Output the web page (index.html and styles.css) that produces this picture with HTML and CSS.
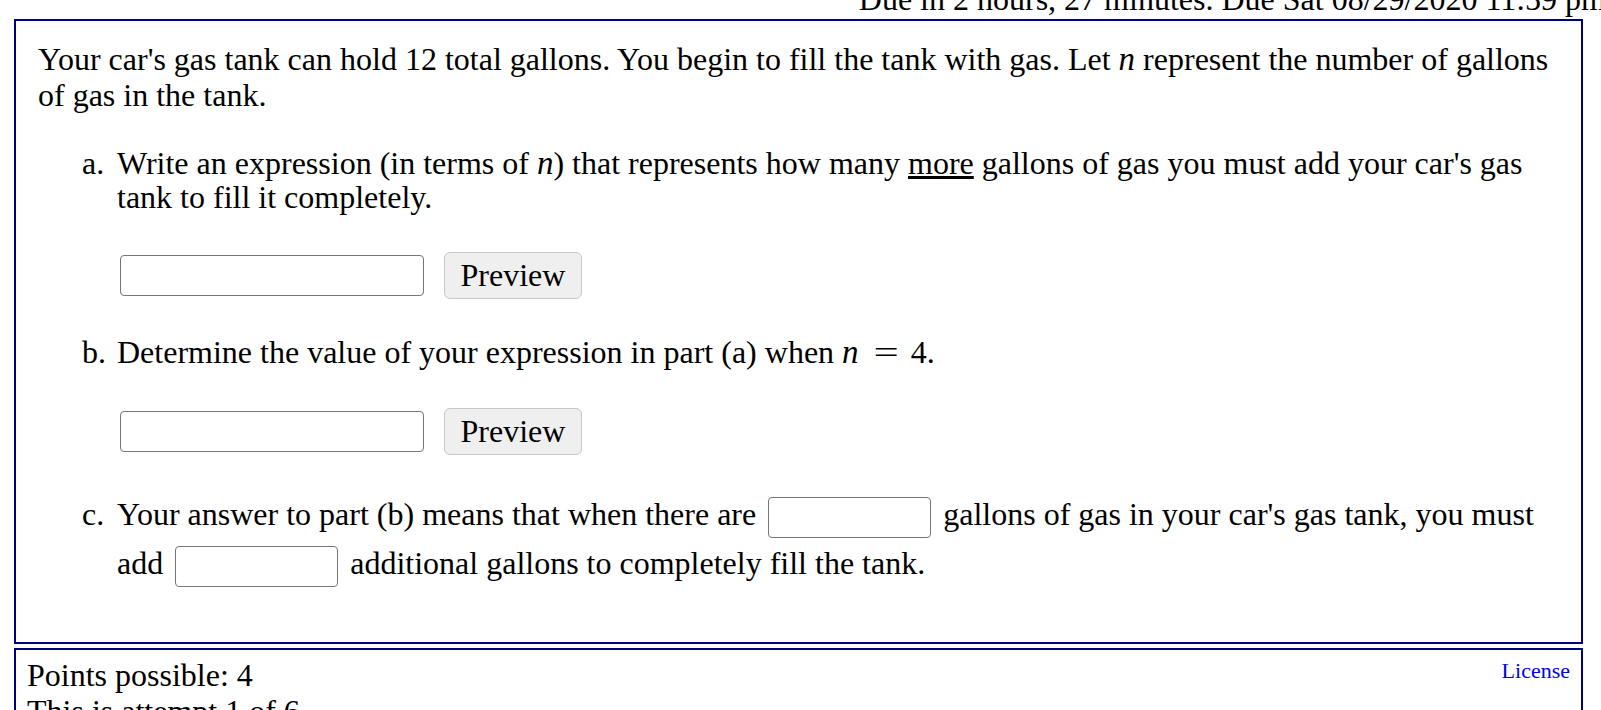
FILE: index.html
```html
<!DOCTYPE html>
<html>
<head>
<meta charset="utf-8">
<link rel="stylesheet" href="styles.css">
</head>
<body>
<div class="due"><span class="due-text">Due in 2 hours, 27 minutes. Due Sat 08/29/2020 11:59 pm</span></div>
<div class="question">
  <p class="intro">Your car's gas tank can hold 12 total gallons. You begin to fill the tank with gas. Let <i class="mv">n</i> represent the number of gallons of gas in the tank.</p>
  <div class="parts">
    <div class="part part-a">
      <span class="mark">a.</span>
      <div class="body">
        <div class="txt">Write an expression (in terms of <i class="mv">n</i>) that represents how many <u>more</u> gallons of gas you must add your car's gas tank to fill it completely.</div>
        <div class="answer"><input class="field" type="text"><button class="preview">Preview</button></div>
      </div>
    </div>
    <div class="part part-b">
      <span class="mark">b.</span>
      <div class="body">
        <div class="txt">Determine the value of your expression in part (a) when <i class="mv">n</i><span class="eq">=</span>4.</div>
        <div class="answer"><input class="field" type="text"><button class="preview">Preview</button></div>
      </div>
    </div>
    <div class="part part-c">
      <span class="mark">c.</span>
      <div class="body">
        <div class="txt">Your answer to part (b) means that when there are <input class="small-field" type="text"> gallons of gas in your car's gas tank, you must add <input class="small-field" type="text"> additional gallons to completely fill the tank.</div>
      </div>
    </div>
  </div>
</div>
<div class="info">
  <a class="license" href="#">License</a>
  <div class="line">Points possible: 4</div>
  <div class="line">This is attempt 1 of 6.</div>
</div>
</body>
</html>
```

FILE: styles.css
```css
html, body {
  margin: 0;
  padding: 0;
  background: #fff;
  overflow: hidden;
}
body {
  font-family: "Liberation Serif", "Times New Roman", serif;
  font-size: 32px;
  line-height: 36px;
  color: #000;
}
.due {
  height: 19px;
  overflow: hidden;
  margin-right: -5px;
  text-align: right;
}
.due-text {
  display: block;
  margin-top: -19px;
  white-space: nowrap;
}
.question {
  margin: 0 18px 0 14px;
  border: 2px solid #000080;
  padding: 20px 22px 54px 22px;
}
.intro {
  margin: 0;
}
.mv {
  font-style: italic;
  font-size: 33px;
}
.eq {
  display: inline-block;
  transform: scaleX(1.4);
  margin: 0 16px 0 18px;
}
.parts {
  margin-top: 33px;
  padding-left: 44px;
}
.part {
  display: flex;
}
.mark {
  width: 35px;
  flex: none;
}
.body {
  flex: 1;
}
.part-a {
  line-height: 34px;
}
.answer {
  display: flex;
  align-items: center;
  gap: 20px;
  margin-top: 38px;
  margin-left: 3px;
}
.field {
  width: 304px;
  height: 41px;
  box-sizing: border-box;
  border: 1.5px solid #767676;
  border-radius: 4px;
  margin: 0;
  padding: 0;
  font: inherit;
}
.preview {
  height: 47px;
  width: 138px;
  box-sizing: border-box;
  border: 1.5px solid #c8c8c8;
  border-radius: 6px;
  background: #efefef;
  font-family: "Liberation Serif", "Times New Roman", serif;
  font-size: 32px;
  color: #000;
  padding: 0;
}
.part-b {
  margin-top: 35px;
}
.part-b .answer {
  margin-top: 38px;
}
.part-c {
  margin-top: 35px;
  line-height: 49px;
}
.small-field {
  width: 163px;
  height: 41px;
  box-sizing: border-box;
  border: 1.5px solid #767676;
  border-radius: 4px;
  margin: 0 4px;
  padding: 0;
  vertical-align: middle;
  font: inherit;
}
.info {
  margin: 4px 18px 0 14px;
  border: 2px solid #000080;
  padding: 7px 11px 20px 11px;
}
.license {
  float: right;
  font-size: 22px;
  color: #0000ee;
  text-decoration: none;
  margin-top: -4px;
}
.line {
  line-height: 36px;
}
```
